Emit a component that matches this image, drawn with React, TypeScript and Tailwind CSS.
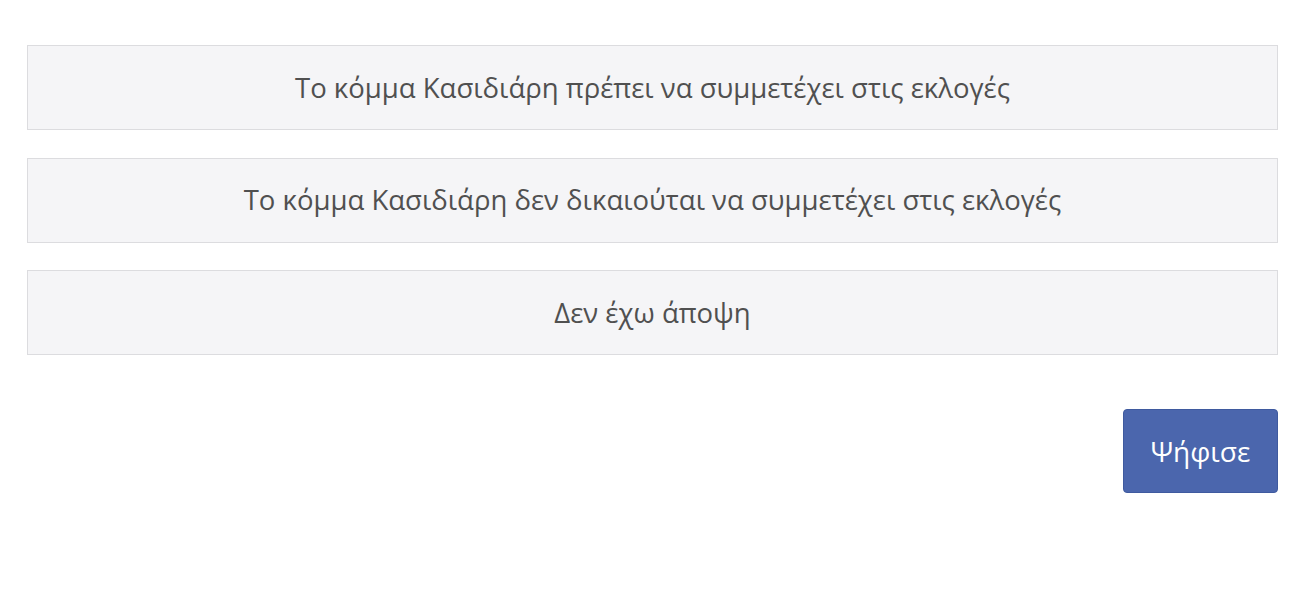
import { useState } from "react";

const options = [
  "Το κόμμα Κασιδιάρη πρέπει να συμμετέχει στις εκλογές",
  "Το κόμμα Κασιδιάρη δεν δικαιούται να συμμετέχει στις εκλογές",
  "Δεν έχω άποψη",
];

export default function App() {
  const [selected, setSelected] = useState<number | null>(null);

  return (
    <div className="min-h-screen bg-white pl-[27px] pr-[24px] pt-[45px] font-['Open_Sans',sans-serif]">
      <div className="flex flex-col gap-[27.5px]">
        {options.map((opt, i) => (
          <button
            key={i}
            onClick={() => setSelected(i)}
            className={`h-[85px] w-full border text-[27.5px] text-[#505050] ${
              selected === i
                ? "border-[#4b66ad] bg-[#eef1f8]"
                : "border-[#dcdcdf] bg-[#f5f5f7]"
            }`}
          >
            {opt}
          </button>
        ))}
      </div>

      <div className="mt-[54px] flex justify-end">
        <button className="h-[84px] w-[155px] rounded-[4px] border border-[#3f5a9f] bg-[#4b66ad] text-[28px] text-white">
          Ψήφισε
        </button>
      </div>
    </div>
  );
}
